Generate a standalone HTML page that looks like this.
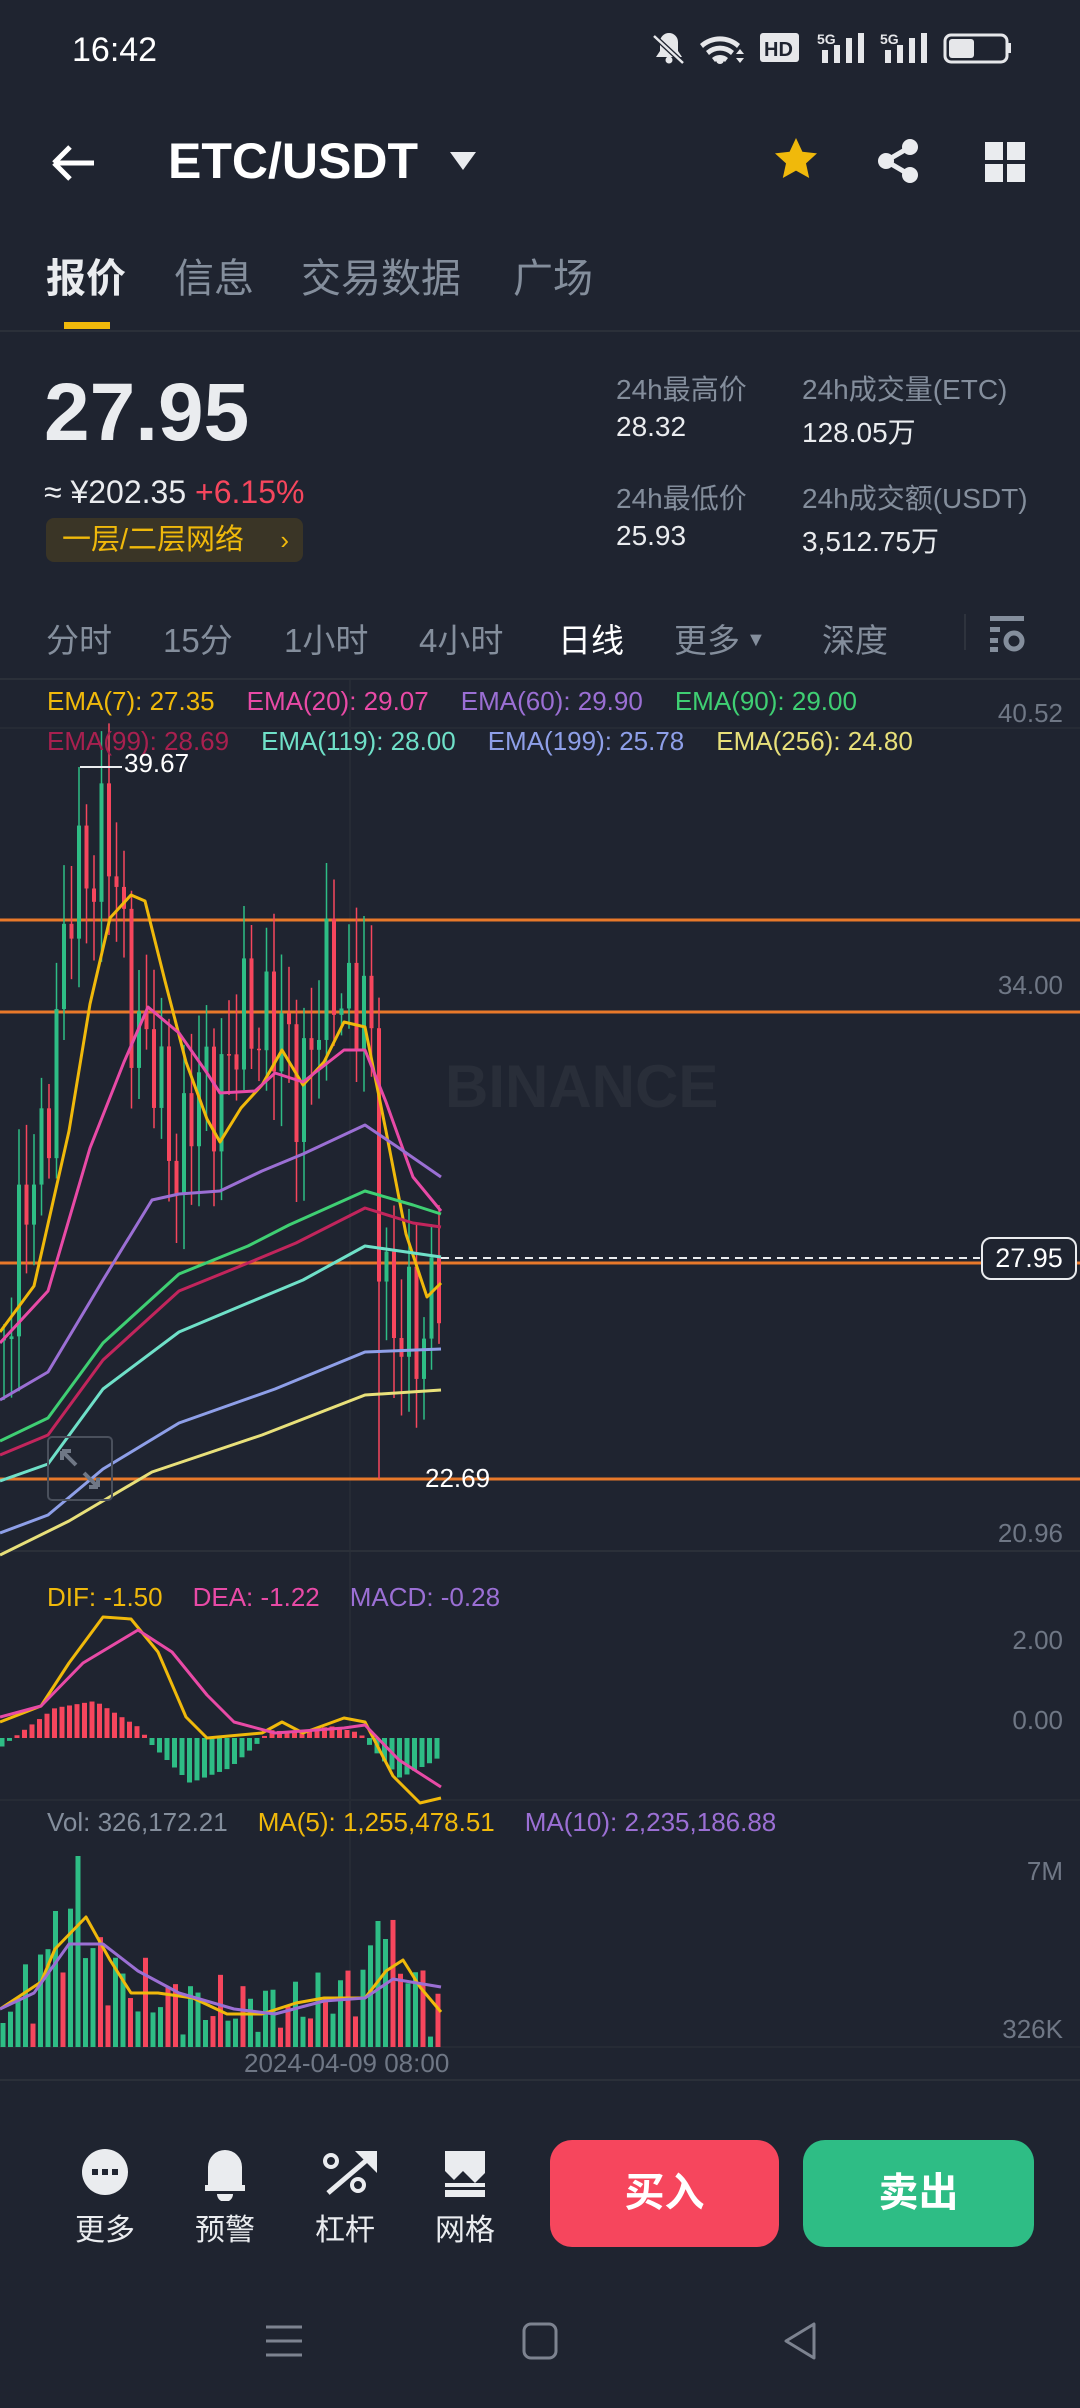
<!DOCTYPE html>
<html><head><meta charset="utf-8">
<style>
*{margin:0;padding:0;box-sizing:border-box}
body{width:1080px;height:2408px;background:#1f2430;position:relative;overflow:hidden;font-family:"Liberation Sans","Noto Sans CJK SC",sans-serif;color:#eaecef}
.a{position:absolute;white-space:nowrap}
.g{color:#848e9c}
.ax{color:#6f7785;font-size:26px}
</style></head><body>
<!-- status bar -->
<div class="a" style="left:72px;top:31px;font-size:34px;color:#fff">16:42</div>
<svg class="a" style="left:640px;top:20px" width="440" height="56" viewBox="640 20 440 56">
 <g fill="#e6e7ea">
  <path d="M656 57h26l-4-6v-9a9 9 0 0 0-18 0v9z"/><circle cx="669" cy="60" r="3.5"/>
  <line x1="654" y1="36" x2="683" y2="63" stroke="#1f2430" stroke-width="5"/><line x1="654" y1="36" x2="683" y2="63" stroke="#e6e7ea" stroke-width="2.5"/>
  <path d="M700 44a30 30 0 0 1 40 0l-3 4a25 25 0 0 0-34 0z M706 51a21 21 0 0 1 28 0l-3 4a16 16 0 0 0-22 0z M712 58a12 12 0 0 1 16 0l-3 4a7 7 0 0 0-10 0z"/><circle cx="720" cy="60" r="4"/>
  <path d="M736 54l4-5 4 5z M736 58l4 5 4-5z"/>
  <rect x="760" y="33" width="39" height="29" rx="3"/>
  <rect x="822" y="50" width="6" height="13"/><rect x="834" y="45" width="6" height="18"/><rect x="846" y="38" width="6" height="25"/><rect x="858" y="33" width="6" height="30"/>
  <rect x="885" y="50" width="6" height="13"/><rect x="897" y="45" width="6" height="18"/><rect x="909" y="38" width="6" height="25"/><rect x="921" y="33" width="6" height="30"/>
  <rect x="945" y="35" width="62" height="27" rx="6" fill="none" stroke="#e6e7ea" stroke-width="3"/><rect x="949" y="39" width="25" height="19" rx="3"/><rect x="1008" y="43" width="3" height="10"/>
 </g>
 <text x="764" y="56" font-size="20" font-weight="bold" fill="#1f2430" font-family="Liberation Sans">HD</text>
 <text x="817" y="44" font-size="14" font-weight="bold" fill="#e6e7ea">5G</text>
 <text x="880" y="44" font-size="14" font-weight="bold" fill="#e6e7ea">5G</text>
</svg>
<!-- header -->
<svg class="a" style="left:50px;top:140px" width="50" height="46"><path d="M4 23h40M4 23l16-16M4 23l16 16" stroke="#fff" stroke-width="5" fill="none"/></svg>
<div class="a" style="left:168px;top:132px;font-size:50px;font-weight:bold;color:#fff">ETC/USDT</div>
<svg class="a" style="left:448px;top:150px" width="30" height="24"><path d="M2 2h26L15 20z" fill="#eaecef"/></svg>
<svg class="a" style="left:772px;top:136px" width="48" height="46" viewBox="0 0 24 23"><path d="M12 1l3.2 6.9 7.3.8-5.5 5 1.6 7.3L12 17.3 5.4 21l1.6-7.3-5.5-5 7.3-.8z" fill="#f0b90b"/></svg>
<svg class="a" style="left:876px;top:138px" width="46" height="46"><g fill="#eaecef"><circle cx="34" cy="9" r="8"/><circle cx="34" cy="37" r="8"/><circle cx="10" cy="23" r="8"/></g><path d="M34 9L10 23l24 14" stroke="#eaecef" stroke-width="5" fill="none"/></svg>
<svg class="a" style="left:985px;top:142px" width="40" height="40"><g fill="#eaecef"><rect width="18" height="18"/><rect x="22" width="18" height="18"/><rect y="22" width="18" height="18"/><rect x="22" y="22" width="18" height="18"/></g></svg>
<!-- tabs -->
<div class="a" style="left:46px;top:246px;font-size:40px;font-weight:bold;color:#eaecef">报价</div>
<div class="a g" style="left:174px;top:246px;font-size:40px">信息</div>
<div class="a g" style="left:301px;top:246px;font-size:40px">交易数据</div>
<div class="a g" style="left:513px;top:246px;font-size:40px">广场</div>
<div class="a" style="left:64px;top:322px;width:46px;height:7px;background:#f0b90b"></div>
<div class="a" style="left:0;top:330px;width:1080px;height:2px;background:#2b3039"></div>
<!-- price -->
<div class="a" style="left:44px;top:366px;font-size:82px;font-weight:bold;color:#eaecef">27.95</div>
<div class="a" style="left:44px;top:474px;font-size:32px;color:#eaecef">≈ ¥202.35 <span style="color:#f6465d">+6.15%</span></div>
<div class="a" style="left:46px;top:518px;width:257px;height:44px;background:#3a3526;border-radius:8px;color:#f0b90b;font-size:29px;line-height:44px;padding-left:16px">一层/二层网络<span style="position:absolute;right:14px;font-size:26px">›</span></div>
<div class="a g" style="left:616px;top:368px;font-size:28px">24h最高价</div>
<div class="a" style="left:616px;top:411px;font-size:28px">28.32</div>
<div class="a g" style="left:802px;top:368px;font-size:28px">24h成交量(ETC)</div>
<div class="a" style="left:802px;top:411px;font-size:28px">128.05万</div>
<div class="a g" style="left:616px;top:477px;font-size:28px">24h最低价</div>
<div class="a" style="left:616px;top:520px;font-size:28px">25.93</div>
<div class="a g" style="left:802px;top:477px;font-size:28px">24h成交额(USDT)</div>
<div class="a" style="left:802px;top:520px;font-size:28px">3,512.75万</div>
<!-- intervals -->
<div class="a g" style="left:46px;top:614px;font-size:33px">分时</div>
<div class="a g" style="left:163px;top:614px;font-size:33px">15分</div>
<div class="a g" style="left:284px;top:614px;font-size:33px">1小时</div>
<div class="a g" style="left:419px;top:614px;font-size:33px">4小时</div>
<div class="a" style="left:558px;top:614px;font-size:33px;color:#fff">日线</div>
<div class="a g" style="left:674px;top:614px;font-size:33px">更多<span style="font-size:20px;position:relative;top:-6px;margin-left:6px">▼</span></div>
<div class="a g" style="left:822px;top:614px;font-size:33px">深度</div>
<div class="a" style="left:964px;top:614px;width:2px;height:36px;background:#2e333d"></div>
<svg class="a" style="left:988px;top:616px" width="38" height="36"><g fill="#848e9c"><rect x="2" y="0" width="34" height="5"/><rect x="2" y="11" width="10" height="5"/><rect x="2" y="22" width="8" height="5"/><rect x="2" y="31" width="8" height="5"/></g><circle cx="26" cy="25" r="8" stroke="#848e9c" stroke-width="5" fill="none"/></svg>
<div class="a" style="left:0;top:678px;width:1080px;height:2px;background:#2b3039"></div>
<!-- chart svg -->
<svg id="ch" class="a" style="left:0;top:0" width="1080" height="2408" viewBox="0 0 1080 2408"></svg>
<!-- legends -->
<div class="a" style="left:47px;top:686px;font-size:26px"><span style="color:#f0b90b">EMA(7): 27.35</span><span style="color:#e84aa6;margin-left:32px">EMA(20): 29.07</span><span style="color:#9b6fd4;margin-left:32px">EMA(60): 29.90</span><span style="color:#3fcf73;margin-left:32px">EMA(90): 29.00</span></div>
<div class="a" style="left:47px;top:726px;font-size:26px"><span style="color:#a8204f">EMA(99): 28.69</span><span style="color:#6fe0c8;margin-left:32px">EMA(119): 28.00</span><span style="color:#8e9fe8;margin-left:32px">EMA(199): 25.78</span><span style="color:#e8e07a;margin-left:32px">EMA(256): 24.80</span></div>
<div class="a ax" style="right:17px;top:698px">40.52</div>
<div class="a ax" style="right:17px;top:970px">34.00</div>
<div class="a ax" style="right:17px;top:1518px">20.96</div>
<div class="a" style="left:124px;top:748px;font-size:26px;color:#fff">39.67</div>
<div class="a" style="left:425px;top:1463px;font-size:26px;color:#fff">22.69</div>
<div class="a" style="left:981px;top:1237px;width:96px;height:43px;border:2px solid #eaecef;border-radius:10px;background:#1f2430;font-size:27px;color:#fff;text-align:center;line-height:39px">27.95</div>
<div class="a" style="left:445px;top:1052px;font-size:60px;font-weight:bold;color:#292e39">BINANCE</div>
<div class="a" style="left:47px;top:1582px;font-size:26px"><span style="color:#f0b90b">DIF: -1.50</span><span style="color:#e84aa6;margin-left:30px">DEA: -1.22</span><span style="color:#9b6fd4;margin-left:30px">MACD: -0.28</span></div>
<div class="a ax" style="right:17px;top:1625px">2.00</div>
<div class="a ax" style="right:17px;top:1705px">0.00</div>
<div class="a" style="left:47px;top:1807px;font-size:26px"><span style="color:#848e9c">Vol: 326,172.21</span><span style="color:#f0b90b;margin-left:30px">MA(5): 1,255,478.51</span><span style="color:#9b6fd4;margin-left:30px">MA(10): 2,235,186.88</span></div>
<div class="a ax" style="right:17px;top:1856px">7M</div>
<div class="a ax" style="right:17px;top:2014px">326K</div>
<div class="a ax" style="left:244px;top:2048px">2024-04-09 08:00</div>
<div class="a" style="left:0;top:2079px;width:1080px;height:2px;background:#2b3039"></div>
<!-- bottom bar -->
<svg class="a" style="left:0;top:2145px" width="540" height="56">
 <g fill="#eaecef">
  <circle cx="105" cy="27" r="23"/>
  <path d="M208 40v-18a17 17 0 0 1 34 0v18h3v6h-40v-6z"/><path d="M217 49h16a8 8 0 0 1-16 0z"/>
  <path d="M355 6h22v22z"/>
  <path d="M445 6h40v22l-10 10-12-12-9 9-9-9z"/><rect x="445" y="38" width="40" height="4"/><rect x="445" y="45" width="40" height="7"/>
 </g>
 <g stroke="#eaecef" fill="none">
  <path d="M328 48L368 14" stroke-width="5"/>
  <circle cx="331" cy="16" r="6" stroke-width="4"/><circle cx="358" cy="40" r="6" stroke-width="4"/>
 </g>
 <g fill="#1f2430"><rect x="92" y="24" width="6" height="6"/><rect x="102" y="24" width="6" height="6"/><rect x="112" y="24" width="6" height="6"/></g>
</svg>
<div class="a" style="left:75px;top:2205px;font-size:30px">更多</div>
<div class="a" style="left:195px;top:2205px;font-size:30px">预警</div>
<div class="a" style="left:315px;top:2205px;font-size:30px">杠杆</div>
<div class="a" style="left:435px;top:2205px;font-size:30px">网格</div>
<div class="a" style="left:550px;top:2140px;width:229px;height:107px;background:#f6465d;border-radius:22px;font-size:40px;font-weight:bold;color:#fff;text-align:center;line-height:107px">买入</div>
<div class="a" style="left:803px;top:2140px;width:231px;height:107px;background:#2ebd85;border-radius:22px;font-size:40px;font-weight:bold;color:#fff;text-align:center;line-height:107px">卖出</div>
<!-- nav -->
<svg class="a" style="left:0;top:2310px" width="1080" height="64">
 <g stroke="#7d8390" stroke-width="3" fill="none">
  <path d="M266 17h36M266 31h36M266 45h36"/>
  <rect x="524" y="14" width="32" height="34" rx="7"/>
  <path d="M814 14v34l-28-17z" stroke-linejoin="round"/>
 </g>
</svg>
<script>
(function(){
var s='';
function P(pts,c,w){s+='<polyline points="'+pts.map(function(p){return p.join(',')}).join(' ')+'" fill="none" stroke="'+c+'" stroke-width="'+(w||3)+'" stroke-linejoin="round"/>';}
function L(x1,y1,x2,y2,c,w,extra){s+='<line x1="'+x1+'" y1="'+y1+'" x2="'+x2+'" y2="'+y2+'" stroke="'+c+'" stroke-width="'+w+'" '+(extra||'')+'/>';}
function R(x,y,w,h,c){if(h<0){y+=h;h=-h;}s+='<rect x="'+x+'" y="'+y+'" width="'+w+'" height="'+Math.max(h,1.5)+'" fill="'+c+'"/>';}
L(0,728,1080,728,'#262b35',2);L(350,680,350,2047,'#262b35',2);
L(0,1551,1080,1551,'#2b3039',2);L(0,1800,1080,1800,'#262b35',2);L(0,2047,1080,2047,'#262b35',2);
[920,1012,1263,1479].forEach(function(y){L(0,y,1080,y,'#e8792a',3);});
var G='#2ebd85',Rd='#f6465d';
function interp(keys,x){for(var i=0;i<keys.length-1;i++){if(x<=keys[i+1][0]){var t=(x-keys[i][0])/(keys[i+1][0]-keys[i][0]);return keys[i][1]+t*(keys[i+1][1]-keys[i][1]);}}return keys[keys.length-1][1];}
var keys=[[0,1330],[20,1250],[40,1150],[60,1000],[75,880],[90,850],[105,840],[120,920],[135,1010],[150,1070],[165,1120],[180,1150],[195,1110],[210,1080],[230,1060],[250,1020],[265,1000],[280,1050],[295,1080],[310,1040],[325,1000],[340,980],[355,990],[370,1040],[380,1250],[392,1300],[405,1340],[420,1360],[432,1270],[441,1250]];
var prev=1340,n=59;
for(var i=0;i<n;i++){var x=4+7.5*i;if(x>442)break;var c=interp(keys,x)+55*Math.sin(i*2.3)+25*Math.cos(i*1.1);
 var o=prev,hi=Math.min(o,c)-(15+Math.abs(Math.sin(i*3.7))*45),lo=Math.max(o,c)+(15+Math.abs(Math.cos(i*2.9))*45);
 if(Math.abs(x-79)<4)hi=767; if(Math.abs(x-379)<4){lo=1479;}
 var col=c<o?G:Rd;L(x,hi,x,lo,col,1.5);R(x-2,Math.min(o,c),4,Math.abs(c-o),col);prev=c;}
P([[0,1332],[34,1286],[69,1131],[90,1004],[110,918],[131,895],[145,901],[165,981],[186,1062],[207,1119],[220,1142],[241,1108],[262,1085],[282,1050],[303,1085],[324,1062],[344,1022],[365,1027],[386,1131],[406,1234],[427,1297],[441,1283]],'#f0b90b');
P([[0,1343],[48,1291],[90,1148],[124,1062],[148,1007],[179,1033],[207,1073],[220,1093],[255,1091],[275,1073],[303,1082],[344,1050],[365,1050],[386,1102],[413,1177],[441,1211]],'#e84aa6');
P([[0,1400],[48,1372],[103,1280],[152,1200],[179,1194],[220,1191],[262,1171],[303,1154],[365,1125],[399,1148],[441,1177]],'#9b6fd4');
P([[0,1441],[48,1418],[103,1343],[179,1274],[248,1246],[289,1225],[365,1191],[413,1205],[441,1214]],'#3fcf73');
P([[0,1455],[48,1435],[103,1360],[179,1291],[248,1263],[296,1243],[365,1208],[413,1223],[441,1227]],'#c2255c');
P([[0,1481],[48,1464],[103,1389],[179,1332],[248,1303],[303,1280],[365,1246],[441,1257]],'#6fe0c8');
P([[0,1533],[48,1515],[103,1469],[179,1423],[275,1389],[365,1352],[441,1349]],'#8e9fe8');
P([[0,1555],[69,1521],[152,1472],[262,1435],[365,1395],[441,1390]],'#e8e07a');
L(441,1258,980,1258,'#eaecef',2,'stroke-dasharray="8,6"');
L(80,767,122,767,'#eaecef',2);
s+='<rect x="48" y="1437" width="64" height="63" rx="4" fill="none" stroke="#4a505c" stroke-width="2"/><path d="M62 1451l14 14M62 1451h9M62 1451v9M98 1487l-14-14M98 1487h-9M98 1487v-9" stroke="#6f7785" stroke-width="4" fill="none"/>';
for(var i=0;i<59;i++){var x=2+7.5*i;if(x>445)break;var h=interp([[0,-10],[20,5],[55,30],[95,37],[140,10],[150,-5],[190,-45],[230,-30],[258,-5],[270,8],[300,5],[330,12],[360,5],[372,-10],[400,-40],[430,-25],[446,-15]],x);
 R(x-2.5,1738,5,-h,h>0?Rd:G);}
P([[0,1722],[41,1706],[69,1663],[103,1617],[131,1619],[158,1652],[186,1717],[207,1738],[262,1733],[282,1722],[303,1733],[344,1718],[365,1722],[393,1776],[420,1803],[441,1798]],'#f0b90b');
P([[0,1717],[41,1706],[83,1663],[138,1630],[172,1652],[207,1695],[234,1722],[275,1733],[344,1728],[365,1725],[399,1760],[441,1787]],'#e84aa6');
for(var i=0;i<59;i++){var x=3+7.5*i;if(x>445)break;var top=interp([[0,2010],[30,1990],[55,1945],[90,1950],[130,1990],[200,2005],[300,2005],[360,1985],[380,1940],[400,1960],[441,2015]],x)+25*Math.sin(i*1.9)+15*Math.cos(i*3.1);
 if(Math.abs(x-79)<4)top=1856;if(Math.abs(x-56)<4)top=1911;if(Math.abs(x-378)<4)top=1921;if(Math.abs(x-386)<4)top=1939;
 R(x-2.5,top,5,2047-top,(i%3==0||Math.sin(i*1.3)>0.2)?G:Rd);}
P([[0,2009],[41,1982],[55,1949],[86,1917],[110,1960],[131,1993],[158,1993],[193,1998],[227,2014],[262,2014],[296,2003],[324,1998],[365,1998],[386,1971],[403,1960],[420,1987],[441,2012]],'#f0b90b');
P([[0,2009],[34,1993],[69,1944],[103,1944],[138,1971],[179,1993],[234,2009],[275,2014],[324,2001],[365,1998],[393,1979],[441,1987]],'#9b6fd4');
document.getElementById('ch').innerHTML=s;
})();
</script>
</body></html>
